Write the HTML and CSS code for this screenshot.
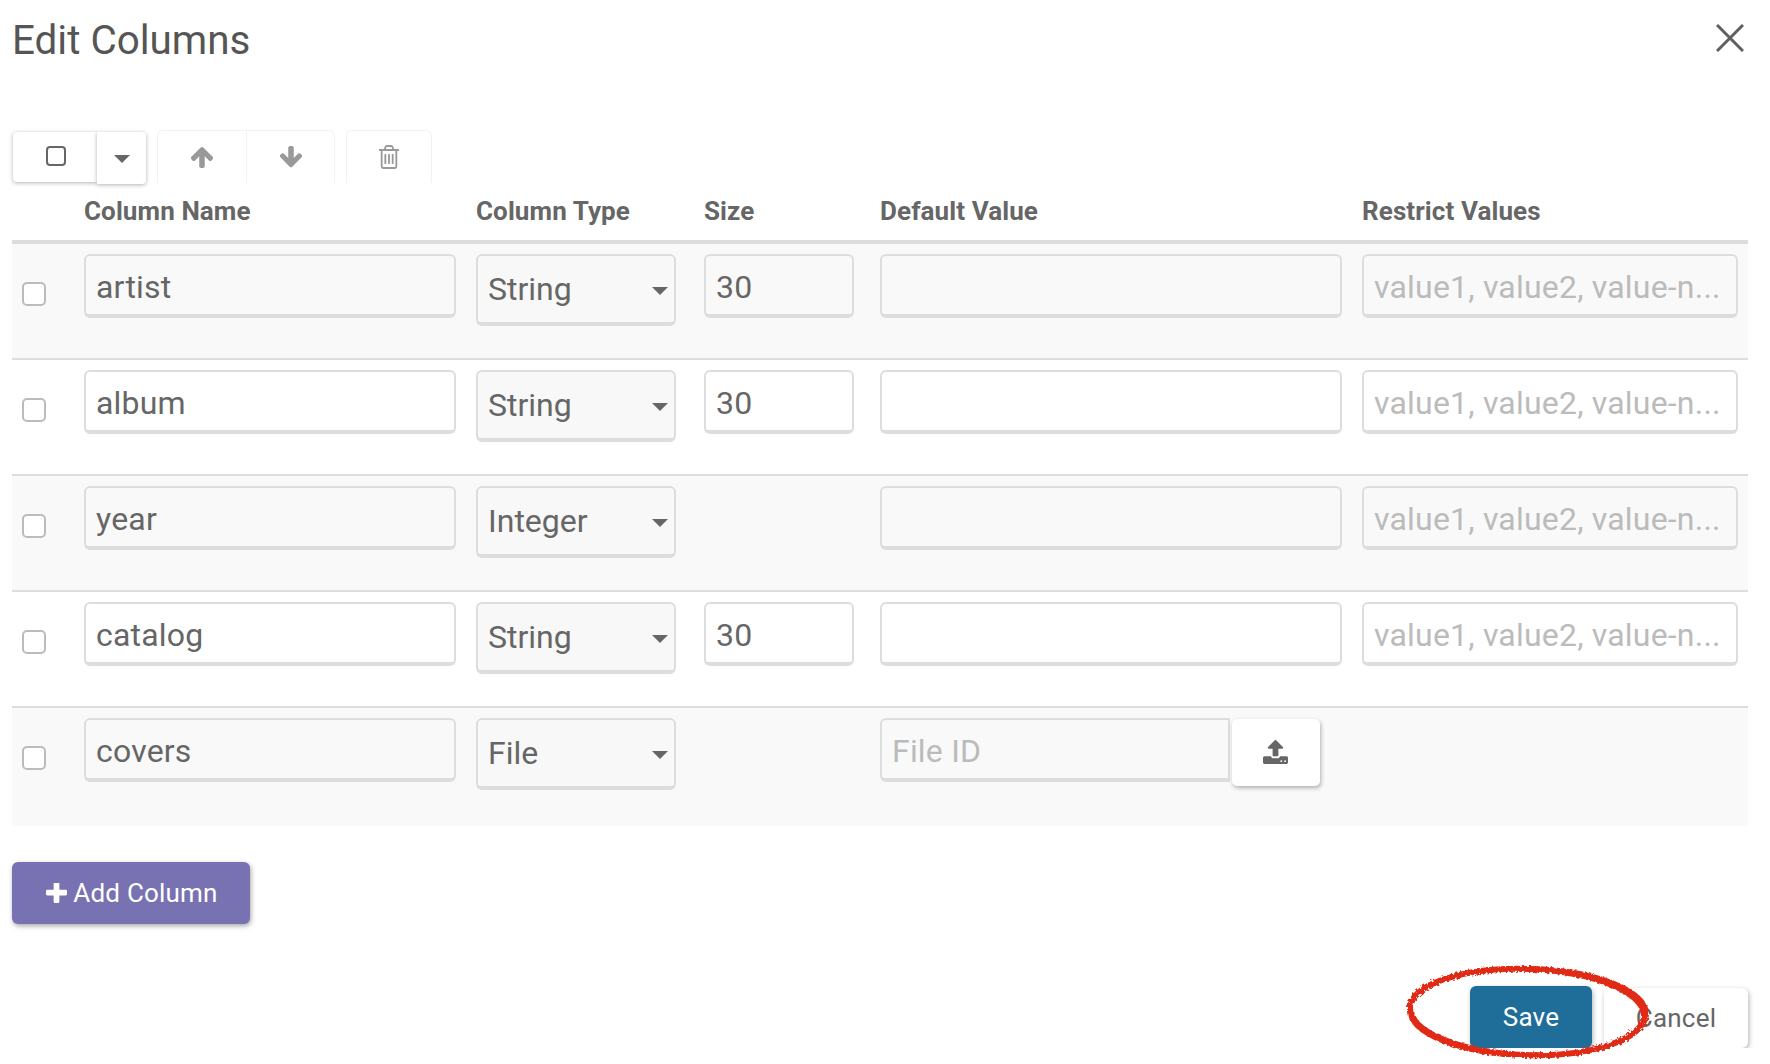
FILE: index.html
```html
<!DOCTYPE html>
<html lang="en">
<head>
    <meta charset="UTF-8">
    <title>Edit Columns</title>
    <link rel="stylesheet" href="styles.css">
</head>
<body>
    <div class="modal">
        <div class="modal-head">
            <h1>Edit Columns</h1>
            <button class="close" aria-label="Close">
                <svg width="28" height="28" viewBox="0 0 28 28"><path d="M1 1L27 27M27 1L1 27" fill="none" stroke="#5f5f5f" stroke-width="3"/></svg>
            </button>
        </div>

        <div class="toolbar">
            <div class="tool-split">
                <button class="tool-check"><span class="check-icon"></span></button>
                <button class="tool-caret">
                    <svg width="16" height="8" viewBox="0 0 16 8"><path d="M0 0H16L8 8Z" fill="#666"/></svg>
                </button>
            </div>
            <div class="tool-group">
                <button class="tool-off">
                    <svg width="22" height="22" viewBox="128 128 1536 1536"><path fill="#999" d="M1675 971q0 51-37 90l-75 75q-38 38-91 38-54 0-90-38l-294-293v704q0 52-37.5 84.5t-90.5 32.5h-128q-53 0-90.5-32.5t-37.5-84.5v-704l-294 293q-36 38-90 38t-90-38l-75-75q-38-38-38-90 0-53 38-91l651-651q35-37 90-37 54 0 91 37l651 651q37 39 37 91z"/></svg>
                </button>
                <button class="tool-off">
                    <svg width="22" height="22" viewBox="128 128 1536 1536"><path fill="#999" d="M1675 832q0 53-37 90l-651 652q-39 37-91 37-53 0-90-37l-651-652q-38-36-38-90 0-53 38-91l74-75q39-37 91-37 53 0 90 37l294 294v-704q0-52 38-90t90-38h128q52 0 90 38t38 90v704l294-294q37-37 90-37 52 0 91 37l75 75q37 39 37 91z"/></svg>
                </button>
            </div>
            <div class="tool-group">
                <button class="tool-off tool-trash">
                    <svg width="22" height="24" viewBox="128 128 1536 1536" preserveAspectRatio="none"><path fill="#999" d="M704 736v576q0 14-9 23t-23 9h-64q-14 0-23-9t-9-23v-576q0-14 9-23t23-9h64q14 0 23 9t9 23zm256 0v576q0 14-9 23t-23 9h-64q-14 0-23-9t-9-23v-576q0-14 9-23t23-9h64q14 0 23 9t9 23zm256 0v576q0 14-9 23t-23 9h-64q-14 0-23-9t-9-23v-576q0-14 9-23t23-9h64q14 0 23 9t9 23zm128 724v-948h-896v948q0 22 7 40.5t14.5 27 10.5 8.5h832q3 0 10.5-8.5t14.5-27 7-40.5zm-672-1076h448l-48-117q-7-9-17-11h-317q-10 2-17 11zm928 32v64q0 14-9 23t-23 9h-96v948q0 83-47 143.5t-113 60.5h-832q-66 0-113-58.5t-47-141.5v-952h-96q-14 0-23-9t-9-23v-64q0-14 9-23t23-9h309l70-167q15-37 54-63t79-26h320q40 0 79 26t54 63l70 167h309q14 0 23 9t9 23z"/></svg>
                </button>
            </div>
        </div>

        <div class="grid-row grid-head">
            <div></div>
            <div>Column Name</div>
            <div>Column Type</div>
            <div>Size</div>
            <div>Default Value</div>
            <div>Restrict Values</div>
        </div>

        <div class="grid-row row-odd">
            <input type="checkbox" class="row-check">
            <input class="field w-name" value="artist">
            <div class="select-wrap"><select class="field-select"><option>String</option><option>Integer</option><option>File</option></select><svg class="select-caret" width="16" height="8" viewBox="0 0 16 8"><path d="M0 0H16L8 8Z" fill="#666"/></svg></div>
            <input class="field w-size" value="30">
            <input class="field w-default">
            <input class="field w-restrict" placeholder="value1, value2, value-n...">
        </div>

        <div class="grid-row row-even">
            <input type="checkbox" class="row-check">
            <input class="field w-name" value="album">
            <div class="select-wrap"><select class="field-select"><option>String</option><option>Integer</option><option>File</option></select><svg class="select-caret" width="16" height="8" viewBox="0 0 16 8"><path d="M0 0H16L8 8Z" fill="#666"/></svg></div>
            <input class="field w-size" value="30">
            <input class="field w-default">
            <input class="field w-restrict" placeholder="value1, value2, value-n...">
        </div>

        <div class="grid-row row-odd">
            <input type="checkbox" class="row-check">
            <input class="field w-name" value="year">
            <div class="select-wrap"><select class="field-select"><option>Integer</option><option>String</option><option>File</option></select><svg class="select-caret" width="16" height="8" viewBox="0 0 16 8"><path d="M0 0H16L8 8Z" fill="#666"/></svg></div>
            <div></div>
            <input class="field w-default">
            <input class="field w-restrict" placeholder="value1, value2, value-n...">
        </div>

        <div class="grid-row row-even">
            <input type="checkbox" class="row-check">
            <input class="field w-name" value="catalog">
            <div class="select-wrap"><select class="field-select"><option>String</option><option>Integer</option><option>File</option></select><svg class="select-caret" width="16" height="8" viewBox="0 0 16 8"><path d="M0 0H16L8 8Z" fill="#666"/></svg></div>
            <input class="field w-size" value="30">
            <input class="field w-default">
            <input class="field w-restrict" placeholder="value1, value2, value-n...">
        </div>

        <div class="grid-row row-odd row-last">
            <input type="checkbox" class="row-check">
            <input class="field w-name" value="covers">
            <div class="select-wrap"><select class="field-select"><option>File</option><option>String</option><option>Integer</option></select><svg class="select-caret" width="16" height="8" viewBox="0 0 16 8"><path d="M0 0H16L8 8Z" fill="#666"/></svg></div>
            <div></div>
            <div class="file-cell">
                <input class="field w-file" placeholder="File ID">
                <button class="upload">
                    <svg width="25" height="25" viewBox="64 64 1664 1664"><path fill="#666" d="M1344 1472q0-26-19-45t-45-19-45 19-19 45 19 45 45 19 45-19 19-45zm256 0q0-26-19-45t-45-19-45 19-19 45 19 45 45 19 45-19 19-45zm128-224v320q0 40-28 68t-68 28h-1472q-40 0-68-28t-28-68v-320q0-40 28-68t68-28h427q21 56 70.5 92t110.5 36h256q61 0 110.5-36t70.5-92h427q40 0 68 28t28 68zm-325-648q-17 40-59 40h-256v448q0 26-19 45t-45 19h-256q-26 0-45-19t-19-45v-448h-256q-42 0-59-40-17-39 14-69l448-448q18-19 45-19t45 19l448 448q31 30 14 69z"/></svg>
                </button>
            </div>
            <div></div>
        </div>

        <button class="btn-add">
            <svg width="21" height="21" viewBox="192 192 1408 1408"><path fill="#fff" d="M1600 736v192q0 40-28 68t-68 28h-416v416q0 40-28 68t-68 28h-192q-40 0-68-28t-28-68v-416h-416q-40 0-68-28t-28-68v-192q0-40 28-68t68-28h416v-416q0-40 28-68t68-28h192q40 0 68 28t28 68v416h416q40 0 68 28t28 68z"/></svg>
            Add Column
        </button>

        <div class="modal-foot">
            <button class="btn-save">Save</button>
            <button class="btn-cancel">Cancel</button>
        </div>
    </div>

    <!-- red marker ring drawn over the buttons -->
    <svg class="marker" width="260" height="110" viewBox="0 0 260 110">
        <defs>
            <filter id="rough" x="-10%" y="-20%" width="120%" height="140%">
                <feTurbulence type="fractalNoise" baseFrequency="0.4" numOctaves="2" seed="4"/>
                <feDisplacementMap in="SourceGraphic" scale="5"/>
            </filter>
        </defs>
        <g filter="url(#rough)" fill="none" stroke="#e12a17">
            <ellipse cx="127" cy="55" rx="117" ry="43" stroke-width="6" transform="rotate(2 127 55)"/>
            <ellipse cx="128" cy="55" rx="119" ry="44" stroke-width="4" transform="rotate(1 128 55)"/>
        </g>
    </svg>
</body>
</html>
```

FILE: styles.css
```css
body { margin: 0; font-family: Roboto, "Liberation Sans", sans-serif; color: #666; background: #fff; }
button { font-family: inherit; cursor: pointer; }

.modal { width: 1736px; margin-left: 12px; }
.modal-head { height: 130px; display: flex; justify-content: space-between; align-items: flex-start; }
.modal-head h1 { margin: 18px 0 0; font-size: 40.4px; line-height: 46px; font-weight: 400; color: #555; }
.close { margin: 24px 4px 0 0; padding: 0; border: none; background: none; height: 28px; }

/* toolbar */
.toolbar { display: flex; height: 54px; gap: 11px; }
.tool-split { display: flex; margin-left: 1px; width: 133px; align-items: flex-start; margin-top: 2px; }
.tool-check { width: 84px; height: 50px; padding: 0; border: none; background: #fff; border-radius: 4px 0 0 4px; box-shadow: 0 1px 4px rgba(0,0,0,.3); display: flex; align-items: center; justify-content: center; }
.tool-caret { width: 49px; height: 52px; padding: 0; border: none; background: #fff; border-radius: 0 4px 4px 0; box-shadow: 0 1px 4px rgba(0,0,0,.3); }
.check-icon { display: block; width: 20px; height: 20px; box-sizing: border-box; border: 2px solid #666; border-radius: 4px; margin: -2px 0 0 2px; }
.tool-group { display: flex; height: 52px; border: 1px solid #f2f2f2; border-bottom: none; border-radius: 6px 6px 0 0; }
.tool-off { width: 88px; padding: 0; border: none; background: none; display: flex; align-items: center; justify-content: center; }
.tool-off + .tool-off { border-left: 1px solid #f2f2f2; }
.tool-trash { width: 84px; }

/* grid */
.grid-row { display: grid; grid-template-columns: 72px 392px 228px 176px 482px 386px; }
.grid-head { height: 56px; border-bottom: 4px solid #ddd; font-size: 26px; line-height: 40px; letter-spacing: 0.1px; font-weight: 700; color: #666; }
.grid-head div { padding-top: 7px; }
.row-odd, .row-even { box-sizing: border-box; height: 116px; padding-top: 10px; border-top: 2px solid #ddd; align-items: start; }
.grid-head + .row-odd { height: 114px; border-top: none; }
.row-odd { background: #f9f9f9; }
.row-even { background: #fff; }
.row-last { height: 120px; }

.row-check { appearance: none; box-sizing: border-box; width: 24px; height: 24px; margin: 28px 0 0 10px; border: 2px solid #bbb; border-radius: 5px; background: #fff; }

.field { box-sizing: border-box; display: block; height: 64px; padding: 3px 10px 0; border: 2px solid #ddd; border-bottom-width: 4px; border-radius: 6px; background: transparent; font-family: inherit; font-size: 32px; letter-spacing: 0.2px; color: #666; outline: none; }
.field::placeholder { color: #bbb; opacity: 1; }
.w-name { width: 372px; }
.w-size { width: 150px; }
.w-default { width: 462px; }
.w-restrict { width: 376px; }
.w-file { width: 350px; border-right-width: 2px; border-radius: 6px 0 0 6px; }

.select-wrap { position: relative; width: 200px; }
.field-select { appearance: none; box-sizing: border-box; display: block; width: 200px; height: 72px; padding: 0 10px; border: 2px solid #ddd; border-bottom-width: 4px; border-radius: 6px; background: #f8f8f8; font-family: inherit; font-size: 32px; color: #666; outline: none; }
.select-caret { position: absolute; right: 8px; top: 33px; }

.file-cell { display: flex; align-items: flex-start; }
.upload { width: 88px; height: 67px; margin: 1px 0 0 2px; padding: 3px 2px 0 0; border: none; border-radius: 5px; background: #fff; box-shadow: 1px 2px 4px rgba(0,0,0,.3); }

/* buttons */
.btn-add { display: flex; align-items: center; justify-content: center; gap: 6px; width: 238px; height: 62px; margin-top: 36px; padding: 0 0 0 2px; border: none; border-radius: 6px; background: #7872b2; color: #fff; font-size: 26px; letter-spacing: 0.2px; box-shadow: 1px 2px 5px rgba(0,0,0,.35); }
.modal-foot { display: flex; justify-content: flex-end; align-items: flex-end; gap: 12px; margin-top: 62px; }
.btn-save { width: 122px; height: 62px; padding: 0; border: none; border-radius: 6px; background: #1f6e99; color: #fff; font-size: 26px; letter-spacing: 0.2px; box-shadow: 1px 2px 5px rgba(0,0,0,.3); }
.btn-cancel { width: 144px; height: 60px; padding: 0; border: none; border-radius: 6px; background: #fff; color: #666; font-size: 26px; letter-spacing: 0.2px; box-shadow: 1px 2px 5px rgba(0,0,0,.3); }

.marker { position: absolute; left: 1400px; top: 957px; pointer-events: none; }
```
